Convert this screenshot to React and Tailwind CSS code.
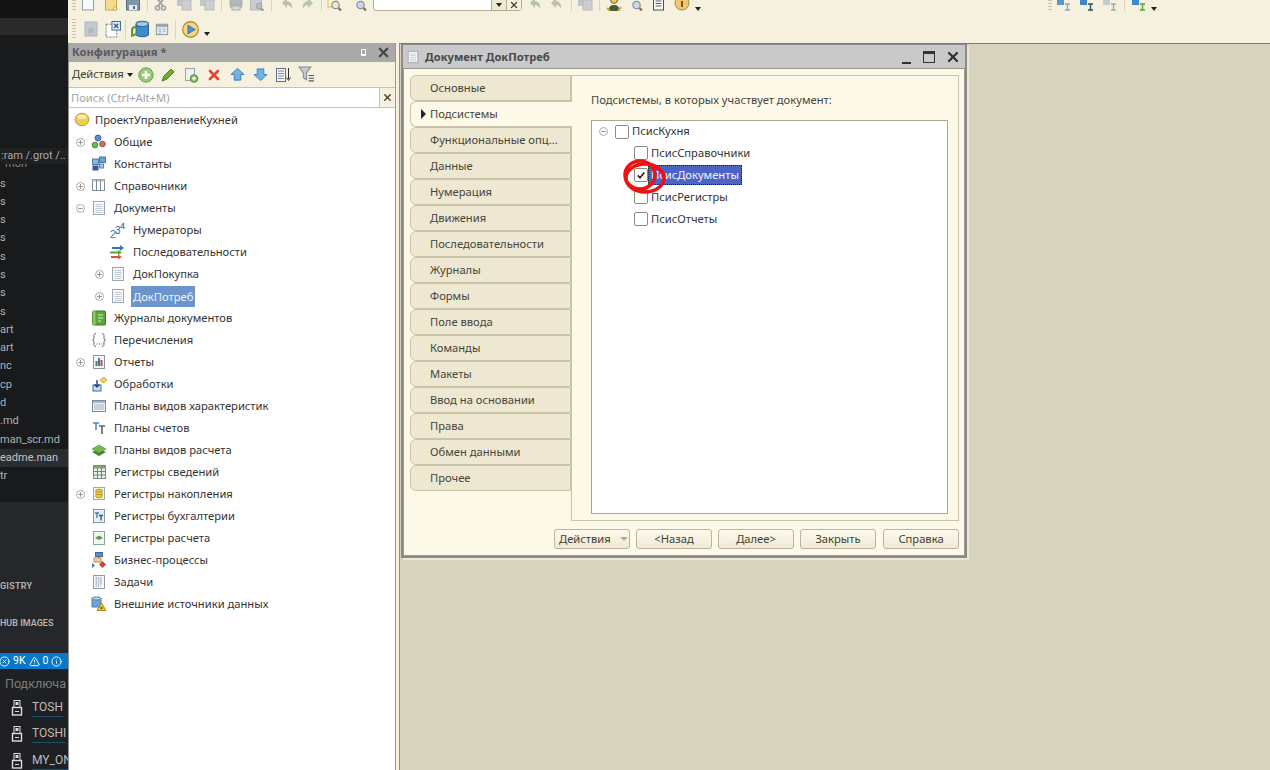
import { Minus, Plus, X, CircleX, TriangleAlert, Info as InfoCircle } from 'lucide-react';

const font = "font-['Noto_Sans',sans-serif]";

// --- small drawn icons (16x16 unless noted) ---
const Svg = ({ children, className = 'w-4 h-4' }) => (
    <svg viewBox="0 0 16 16" className={`${className} shrink-0`}>{children}</svg>
);

const DocIcon = ({ className }) => (
    <Svg className={className}>
        <rect x="2.5" y="1.5" width="11" height="13" fill="#f7f9fb" stroke="#9aa6b2" />
        <path d="M4.5 4.5h7M4.5 6.5h7M4.5 8.5h7M4.5 10.5h7M4.5 12.5h7" stroke="#c3ccd6" />
    </Svg>
);
const TopDoc = () => (
    <Svg>
        <rect x="2.5" y="-3" width="11" height="13" fill="#f7f9fb" stroke="#8d9cac" />
    </Svg>
);
const FolderDoc = () => (
    <Svg>
        <rect x="2.5" y="-3" width="11" height="13" fill="#f5dc8c" stroke="#c9a94e" />
        <path d="M9 10l4.500-4.500V10z" fill="#fff6cf" stroke="#c9a94e" />
    </Svg>
);
const SaveIcon = () => (
    <Svg>
        <rect x="1.5" y="-3" width="13" height="13" fill="#7f95a8" stroke="#566d80" />
        <rect x="4" y="5" width="8" height="5" fill="#e6ebef" />
        <rect x="8" y="6" width="2" height="3" fill="#566d80" />
    </Svg>
);
const Scissors = () => (
    <Svg>
        <path d="M3 -3l7 9M12 -3L5 6" stroke="#9ea4a8" strokeWidth="2" fill="none" />
        <circle cx="4.5" cy="8" r="2" fill="none" stroke="#9ea4a8" strokeWidth="1.600" />
        <circle cx="10.5" cy="8" r="2" fill="none" stroke="#9ea4a8" strokeWidth="1.600" />
    </Svg>
);
const GrayPages = () => (
    <Svg>
        <rect x="1" y="-4" width="9" height="10" fill="#c3c6c6" />
        <rect x="6" y="0" width="9" height="10" fill="#ccced0" stroke="#b8bbbd" />
    </Svg>
);
const GrayPrint = () => (
    <Svg>
        <rect x="1.5" y="-1" width="13" height="9" rx="2" fill="#b4b7b8" />
        <rect x="4" y="6" width="8" height="4" fill="#d8d9da" stroke="#a9acad" />
    </Svg>
);
const GrayPreview = () => (
    <Svg>
        <rect x="1.5" y="-4" width="11" height="14" fill="#c9ccd0" stroke="#b4b7bc" />
        <circle cx="10" cy="6" r="3" fill="#b9bdc2" stroke="#a2a6aa" />
        <path d="M12 8.500l2.500 2" stroke="#a08c80" strokeWidth="2" />
    </Svg>
);
const Turn = ({ flip }) => (
    <Svg>
        <g transform={flip ? 'matrix(-1 0 0 1 16 0)' : undefined}>
            <path d="M7 -2L2 3l5 5V5c2 0 4 1 5 4 1-5-2-8-5-8z" fill="#b9c0b4" />
        </g>
    </Svg>
);
const Loupe = ({ withDoc }) => (
    <Svg>
        {withDoc && <rect x="1" y="-3" width="9" height="10" fill="#fff3c0" stroke="#d8bf62" />}
        <circle cx="8.500" cy="5" r="3.700" fill={withDoc ? '#e7e7df' : '#c7d9ee'} stroke="#8b8f95" strokeWidth="1.200" />
        <path d="M11.500 8l2.500 2.500" stroke="#a0613e" strokeWidth="2.200" />
    </Svg>
);
const Person = () => (
    <Svg>
        <circle cx="8" cy="0" r="3.400" fill="#f0c66a" stroke="#6d5a2a" />
        <path d="M2 11c1-5 3-6 6-6s5 1 6 6z" fill="#4c5a3c" />
        <path d="M1 8l3 3M12 11l3-4" stroke="#d7a53c" strokeWidth="2" />
    </Svg>
);
const Info = () => (
    <Svg>
        <circle cx="8" cy="3" r="7" fill="#f1c66f" stroke="#a58a3f" />
        <rect x="7" y="1" width="2" height="6" fill="#6e5a28" />
    </Svg>
);
const DocLines = () => (
    <Svg>
        <rect x="3.500" y="-3" width="10" height="13" fill="#fff" stroke="#4d4d45" />
        <path d="M5.500 1h6M5.500 3.500h6M5.500 6h6" stroke="#55554d" />
    </Svg>
);
const Grip = () => (
    <div className="w-[4px] h-[20px] shrink-0 bg-[repeating-linear-gradient(180deg,#c9c2a0_0,#c9c2a0_1px,#f5f1dd_1px,#f5f1dd_3px)]" />
);
const Sep = ({ h = 'h-[19px]' }) => <div className={`w-px ${h} shrink-0 bg-[#d9d4b9]`} />;
const Caret = () => <div className="w-0 h-0 shrink-0 border-x-[3px] border-t-[4px] border-x-transparent border-t-[#222]" />;

// toolbar row 2 icons
const GrayForm = () => (
    <Svg>
        <rect x="2" y="1" width="12" height="14" fill="#c2c8cc" stroke="#afb5b8" />
        <rect x="5" y="7" width="6" height="5" fill="#b3b8bc" />
    </Svg>
);
const CrossForm = () => (
    <Svg className="w-[17px] h-[17px]">
        <rect x="2" y="3" width="10" height="12" fill="#fff" stroke="#7e8a96" strokeDasharray="2 1" />
        <rect x="7.500" y="0.500" width="8" height="8" fill="#eaf2fa" stroke="#4a6f94" />
        <path d="M9.500 2.500l4 4m0-4l-4 4" stroke="#2d5f8f" strokeWidth="1.300" />
    </Svg>
);
const DbIcon = () => (
    <Svg className="w-[18px] h-[18px]">
        <ellipse cx="10" cy="3.500" rx="5.500" ry="2.300" fill="#a5c8e6" stroke="#39719f" />
        <path d="M4.500 3.500v9c0 1.300 2.500 2.300 5.500 2.300s5.500-1 5.500-2.300v-9c0 1.300-2.500 2.300-5.500 2.300S4.500 4.800 4.500 3.500z" fill="#3f8ac8" stroke="#2f6b9e" />
        <path d="M1 9c0-2 1.500-3 3.500-3M1 9l-.500 5 4-1.500" fill="none" stroke="#5c9a36" strokeWidth="2" />
    </Svg>
);
const WinIcon = () => (
    <Svg className="w-[14px] h-[14px]">
        <rect x="1.500" y="2.500" width="13" height="12" fill="#e3e9ee" stroke="#7f8f9e" />
        <rect x="2" y="3" width="12" height="2.500" fill="#8fa3b5" />
        <path d="M4 8h3M4 10.500h3M4 13h3M9 8h3M9 10.500h3" stroke="#93a1ae" />
    </Svg>
);
const PlayIcon = () => (
    <Svg className="w-[17px] h-[17px]">
        <circle cx="8" cy="8" r="7.300" fill="#f6d68a" stroke="#b98f2c" strokeWidth="1.200" />
        <path d="M5.500 3.800l7 4.200-7 4.200z" fill="#4d8fc4" stroke="#2e6796" strokeWidth=".6" />
    </Svg>
);
const SmallSys = ({ a, b }) => (
    <Svg>
        <rect x="1" y="-3" width="7" height="8" fill={a} />
        <path d="M9 4h5M11.500 4v6M9 10h5" stroke={b} strokeWidth="1.400" fill="none" />
    </Svg>
);

// tree icons
const Ball = () => (
    <Svg>
        <ellipse cx="8" cy="7.500" rx="6.800" ry="6.300" fill="#f1cf4e" stroke="#b39a4f" />
        <ellipse cx="8" cy="5" rx="4.500" ry="2.200" fill="#fbeeb0" />
    </Svg>
);
const Common = () => (
    <Svg>
        <circle cx="7" cy="4" r="3" fill="#5a8fc9" stroke="#3b6c9f" />
        <circle cx="4" cy="11" r="2.800" fill="#6dbb46" stroke="#4a8a2c" />
        <circle cx="11.500" cy="10" r="2.800" fill="#c4726a" stroke="#965048" />
    </Svg>
);
const Constants = () => (
    <Svg>
        <rect x="1.500" y="3" width="6" height="5.500" fill="#8fb4d8" stroke="#4b7cab" />
        <rect x="8.500" y="1" width="6" height="5.500" fill="#6d9fcf" stroke="#4b7cab" />
        <rect x="1.500" y="9.500" width="6" height="5" fill="#2f5f91" />
        <rect x="8.500" y="8" width="4" height="4" fill="#aac3dc" stroke="#5b86b0" />
    </Svg>
);
const Catalog = () => (
    <Svg>
        <rect x="1.500" y="1.500" width="12" height="11" fill="#fff" stroke="#7d8b96" />
        <rect x="1.500" y="1.500" width="12" height="2" fill="#bcc5cc" />
        <path d="M5.500 2v10M9.500 2v10" stroke="#7d8b96" />
    </Svg>
);
const Numerator = () => (
    <Svg>
        <text x="0" y="16" fontSize="11" fill="#3a78b5" fontFamily="Liberation Sans">2</text>
        <text x="5" y="12" fontSize="10" fill="#2d6097" fontFamily="Liberation Sans">3</text>
        <text x="10" y="7" fontSize="9" fill="#26496e" fontFamily="Liberation Sans">4</text>
    </Svg>
);
const Sequence = () => (
    <Svg>
        <path d="M2 4h9" stroke="#3577b5" strokeWidth="2" />
        <path d="M10 1l4 3-4 3z" fill="#3577b5" />
        <path d="M0 8.500h9" stroke="#5ca636" strokeWidth="2" />
        <path d="M8 6l4 2.500-4 2.500z" fill="#5ca636" />
        <path d="M1 13h8" stroke="#d8523c" strokeWidth="2" />
        <path d="M8 10.500l4 2.500-4 2.500z" fill="#d8523c" />
    </Svg>
);
const Journal = () => (
    <Svg>
        <rect x="1.500" y="1" width="13" height="14" rx="1" fill="#5aa63a" stroke="#3c7c26" />
        <rect x="1.500" y="1" width="3" height="14" fill="#8ec46c" />
        <path d="M7 5h5M7 8h5M7 11h3" stroke="#dfeed4" />
    </Svg>
);
const Enums = () => (
    <Svg>
        <path d="M5 1.500C3 1.500 3 3 3 5s0 2.500-1.500 3C3 8.500 3 9 3 11s0 3.500 2 3.500M11 1.500c2 0 2 1.500 2 3.500s0 2.500 1.500 3C13 8.500 13 9 13 11s0 3.500-2 3.500" fill="none" stroke="#5b6a78" />
        <path d="M5.500 12h1M8 12h1M10.500 12h1" stroke="#555" />
    </Svg>
);
const Reports = () => (
    <Svg>
        <rect x="2.500" y="1.500" width="11" height="13" fill="#f5f7f9" stroke="#8795a1" />
        <rect x="4.500" y="7" width="2" height="5" fill="#3c8a3a" />
        <rect x="7" y="4" width="2" height="8" fill="#3e73ae" />
        <rect x="9.500" y="6" width="2" height="6" fill="#c8493c" />
    </Svg>
);
const DataProc = () => (
    <Svg>
        <path d="M9 4l4-3 3 3-4 3z" fill="#f2d565" stroke="#cda93a" />
        <rect x="2" y="9" width="8" height="6" fill="#cfdded" stroke="#3c6a9a" />
        <path d="M6 4v7M3.500 8.500L6 11l2.500-2.500" stroke="#20486f" strokeWidth="1.400" fill="none" />
    </Svg>
);
const CharTypes = () => (
    <Svg>
        <rect x="1.500" y="2.500" width="13" height="11" fill="#eef2f6" stroke="#7b8c9b" />
        <rect x="2" y="3" width="12" height="2" fill="#a7b7c5" />
        <path d="M3.500 7h9M3.500 9h9M3.500 11h9" stroke="#55718a" strokeDasharray="1 1" />
    </Svg>
);
const Accounts = () => (
    <Svg>
        <path d="M2 3h6M5 3v7" stroke="#4a8ac2" strokeWidth="1.600" />
        <path d="M8 6h6M11 6v8" stroke="#59636d" strokeWidth="1.600" />
    </Svg>
);
const CalcTypes = () => (
    <Svg>
        <path d="M1 10l7 4 7-4-7-3z" fill="#3f8a2e" />
        <path d="M1 7l7-4 7 4-7 4z" fill="#7ab84e" stroke="#4b8a2e" strokeWidth=".6" />
    </Svg>
);
const InfoReg = () => (
    <Svg>
        <rect x="2.500" y="1.500" width="12" height="13" fill="#e8f1e4" stroke="#71908a" />
        <rect x="3" y="2" width="11" height="2.500" fill="#7ca869" />
        <path d="M6.500 4v10M10.500 4v10M3 7.500h11M3 11h11" stroke="#6f8a6a" />
    </Svg>
);
const AccumReg = () => (
    <Svg>
        <rect x="2.500" y="1.500" width="11" height="12" fill="#f2f6fa" stroke="#9aaaba" />
        <ellipse cx="8" cy="5" rx="3.500" ry="1.800" fill="#f0c93e" stroke="#c39a20" />
        <ellipse cx="8" cy="7.500" rx="3.500" ry="1.800" fill="#f0c93e" stroke="#c39a20" />
        <ellipse cx="8" cy="10" rx="3.500" ry="1.800" fill="#f0c93e" stroke="#c39a20" />
    </Svg>
);
const BookReg = () => (
    <Svg>
        <rect x="2.500" y="1.500" width="11" height="13" fill="#e6f0f8" stroke="#7f9bb3" />
        <path d="M4 5h4M6 5v5" stroke="#3d7fb8" strokeWidth="1.400" />
        <path d="M8 7.500h4M10 7.500v5" stroke="#47525c" strokeWidth="1.400" />
    </Svg>
);
const CalcReg = () => (
    <Svg>
        <rect x="2.500" y="1.500" width="11" height="13" fill="#f1f6f3" stroke="#8ba3a0" />
        <path d="M4 8l4-2.500L12 8l-4 2z" fill="#5f9c45" />
    </Svg>
);
const BizProc = () => (
    <Svg>
        <rect x="4.500" y="0.500" width="7" height="4" fill="#5c8fbe" stroke="#3a6a96" />
        <path d="M8 4.500v2" stroke="#555" />
        <rect x="3" y="6" width="7" height="4" fill="#f1d2a8" stroke="#c58d4c" />
        <path d="M1 11l3 2.500L1 16z" fill="#4a79a8" />
        <path d="M11.500 9l3.500 3.500-3.500 3.500L8 12.500z" fill="#d8402f" />
    </Svg>
);
const Tasks = () => (
    <Svg>
        <rect x="2.500" y="1.500" width="11" height="13" fill="#f8fafc" stroke="#8c9aa8" />
        <path d="M4.500 4h7M4.500 6h7M4.500 8h7M4.500 10h7M4.500 12h5" stroke="#7e8d9c" strokeDasharray="1.500 .8" />
    </Svg>
);
const External = () => (
    <Svg>
        <path d="M1 2h9v9H1z" fill="#6ea3d4" stroke="#4a7eae" />
        <ellipse cx="5.500" cy="2.500" rx="4.500" ry="1.500" fill="#c2daf0" stroke="#4a7eae" />
        <path d="M10.500 7l4.500 7.500H6z" fill="#efc748" stroke="#a9861e" />
        <circle cx="10.500" cy="12" r="1.200" fill="#7a5d10" />
    </Svg>
);

const Expander = ({ open }) => (
    <div className="w-[9px] h-[9px] shrink-0 rounded-full border border-[#a9a9a9] flex items-center justify-center bg-white">
        {open
            ? <Minus className="w-[7px] h-[7px] text-[#777]" strokeWidth={2.500} />
            : <Plus className="w-[7px] h-[7px] text-[#777]" strokeWidth={2.500} />}
    </div>
);

const tree = [
    { label: 'Общие', Icon: Common, exp: 'plus' },
    { label: 'Константы', Icon: Constants },
    { label: 'Справочники', Icon: Catalog, exp: 'plus' },
    { label: 'Документы', Icon: DocIcon, exp: 'minus' },
    { label: 'Нумераторы', Icon: Numerator, sub: true },
    { label: 'Последовательности', Icon: Sequence, sub: true },
    { label: 'ДокПокупка', Icon: DocIcon, sub: true, exp: 'plus' },
    { label: 'ДокПотреб', Icon: DocIcon, sub: true, exp: 'plus', selected: true },
    { label: 'Журналы документов', Icon: Journal },
    { label: 'Перечисления', Icon: Enums },
    { label: 'Отчеты', Icon: Reports, exp: 'plus' },
    { label: 'Обработки', Icon: DataProc },
    { label: 'Планы видов характеристик', Icon: CharTypes },
    { label: 'Планы счетов', Icon: Accounts },
    { label: 'Планы видов расчета', Icon: CalcTypes },
    { label: 'Регистры сведений', Icon: InfoReg },
    { label: 'Регистры накопления', Icon: AccumReg, exp: 'plus' },
    { label: 'Регистры бухгалтерии', Icon: BookReg },
    { label: 'Регистры расчета', Icon: CalcReg },
    { label: 'Бизнес-процессы', Icon: BizProc },
    { label: 'Задачи', Icon: Tasks },
    { label: 'Внешние источники данных', Icon: External },
];

const tabs = ['Основные', 'Подсистемы', 'Функциональные опц...', 'Данные', 'Нумерация', 'Движения', 'Последовательности', 'Журналы', 'Формы', 'Поле ввода', 'Команды', 'Макеты', 'Ввод на основании', 'Права', 'Обмен данными', 'Прочее'];

const files = ['s', 's', 's', 's', 's', 's', 's', 's', 'art', 'art', 'nc', 'cp', 'd', '.md', 'man_scr.md', 'eadme.man', 'tr'];

const Check = ({ checked }) => (
    <div className="relative z-10 w-[14px] h-[14px] shrink-0 rounded-[2px] border border-[#8b8b80] bg-white flex items-center justify-center">
        {checked && (
            <svg viewBox="0 0 12 12" className="w-[10px] h-[10px]">
                <path d="M2 6.500l2.800 2.800L10 3" fill="none" stroke="#222" strokeWidth="2" />
            </svg>
        )}
    </div>
);

const Btn = ({ children, className = 'w-[76px]' }) => (
    <div className={`${className} h-[20px] rounded-[3px] border border-[#b9b49a] bg-[linear-gradient(180deg,#fdfaee,#efe9d5)] flex items-center justify-center text-[11.200px] text-[#3f3f30]`}>
        {children}
    </div>
);

const UsbIcon = () => (
    <svg viewBox="0 0 12 16" className="w-[12px] h-[18px] shrink-0">
        <rect x="3" y="0.500" width="6" height="7" fill="none" stroke="#ddd" />
        <rect x="4.500" y="2" width="3" height="3" fill="#ddd" />
        <rect x="1.500" y="7.500" width="9" height="7.500" fill="none" stroke="#ddd" strokeWidth="1.400" />
        <path d="M4 11.500h4" stroke="#ddd" />
    </svg>
);

export default function App() {
    return (
        <div className={`${font} w-[1270px] h-[770px] overflow-hidden flex bg-[#d8d3bf]`}>
            {/* editor left behind the app window */}
            <div className="w-[68px] shrink-0 h-full overflow-hidden flex flex-col bg-[#191a1b] text-[#b0b0b0] text-[11px] whitespace-nowrap font-['Roboto',sans-serif]">
                <div className="h-[18px] shrink-0 bg-[#131313]" />
                <div className="h-[17px] shrink-0 bg-[#2a2a2a]" />
                <div className="h-[113px] shrink-0" />
                <div className="h-[16px] shrink-0 bg-[#1f2021] text-[#a9a9a9] leading-[16px] pl-px">:ram /.grot /..</div>
                <div className="h-[10.500px] shrink-0 overflow-hidden text-[#8a8a8a] pl-[5px]">
                    <div className="leading-[10px] -translate-y-[5px]">mon</div>
                </div>
                {files.map((f, i) => (
                    <div key={i} className={`h-[18.300px] shrink-0 leading-[18px] ${f === 'eadme.man' ? 'bg-[#2c2d2f] text-[#c4c4c4]' : ''}`}>{f}</div>
                ))}
                <div className="h-[16.500px] shrink-0" />
                <div className="flex-1 min-h-0 flex flex-col bg-[#26272a]">
                    <div className="h-[90px] shrink-0 flex items-end text-[9px] font-semibold text-[#b4b4b4] tracking-wide leading-[12px]">GISTRY</div>
                    <div className="h-[37px] shrink-0 flex items-end text-[9px] font-semibold text-[#b4b4b4] leading-[12px]">HUB IMAGES</div>
                    <div className="h-[24px] shrink-0" />
                    <div className="h-[16px] shrink-0 bg-[#0a78c8] text-white text-[10.500px] flex items-center -ml-px gap-[3px]">
                        <CircleX className="w-[11px] h-[11px]" />
                        <span>9K</span>
                        <TriangleAlert className="w-[11px] h-[11px]" />
                        <span>0</span>
                        <InfoCircle className="w-[11px] h-[11px]" />
                    </div>
                    <div className="flex-1 bg-[#1e2023] overflow-hidden">
                        <div className="pl-[5px] pt-[6px] text-[#7d7d7d] text-[12.500px] leading-[17px]">Подключа</div>
                        <div className="flex flex-col gap-[9.500px] pt-[7px]">
                            {['TOSH', 'TOSHI', 'MY_ON'].map(n => (
                                <div key={n} className="flex items-center gap-[9px] pl-[11px] h-[17px] text-[#bdbdbd] text-[12px]">
                                    <UsbIcon />
                                    <span className="border-b border-[#1d4d6d] leading-[17px]">{n}</span>
                                </div>
                            ))}
                        </div>
                    </div>
                </div>
            </div>

            <div className="flex-1 min-w-0 flex flex-col">
                {/* toolbars */}
                <div className="h-[43px] shrink-0 bg-[#f5f1de] flex flex-col">
                    <div className="h-[11px] overflow-hidden flex items-start pl-[4px]">
                        <Grip />
                        <div className="flex items-start gap-[6.500px] ml-[4px]">
                            <TopDoc /><FolderDoc /><SaveIcon />
                        </div>
                        <div className="ml-[6px]"><Sep /></div>
                        <div className="flex items-start gap-[7px] ml-[5px]">
                            <Scissors /><GrayPages /><GrayPages />
                        </div>
                        <div className="ml-[6px]"><Sep /></div>
                        <div className="flex items-start gap-[5px] ml-[6px]">
                            <GrayPrint /><GrayPreview />
                        </div>
                        <div className="ml-[6px]"><Sep /></div>
                        <div className="flex items-start gap-[3px] ml-[8px]">
                            <Turn /><Turn flip />
                        </div>
                        <div className="ml-[6px]"><Sep /></div>
                        <div className="flex items-start gap-[9px] ml-[5px]">
                            <Loupe withDoc /><Loupe />
                        </div>
                        <div className="ml-[5px] w-[149px] h-[12px] -mt-[1px] bg-white border border-[#b3ad8f] rounded-b-[3px] flex justify-end shrink-0">
                            <div className="w-[15px] h-full border-l border-[#b3ad8f] bg-[#efe9d0] flex items-center justify-center"><Caret /></div>
                            <div className="w-[15px] h-full border-l border-[#b3ad8f] bg-[#f5f1de] flex items-center justify-center">
                                <X className="w-[10px] h-[10px] text-[#4b4224]" strokeWidth={3} />
                            </div>
                        </div>
                        <div className="flex items-start gap-[5px] ml-[6px]">
                            <Turn /><Turn />
                        </div>
                        <div className="ml-[6px]"><Sep /></div>
                        <div className="ml-[5px]"><GrayPages /></div>
                        <div className="ml-[6px]"><Sep /></div>
                        <div className="flex items-start gap-[6px] ml-[6px]">
                            <Person /><Loupe /><DocLines />
                        </div>
                        <div className="flex items-start gap-[5px] ml-[8px]">
                            <Info />
                            <div className="pt-[7px]"><Caret /></div>
                        </div>
                        <div className="ml-auto flex items-start pr-[113px]">
                            <Grip />
                            <div className="flex items-start gap-[7px] ml-[4px]">
                                <SmallSys a="#5b94c6" b="#87a9c4" />
                                <SmallSys a="#3f87c4" b="#2e4d62" />
                                <SmallSys a="#c4ccd2" b="#9eaab2" />
                            </div>
                            <div className="ml-[6px]"><Sep /></div>
                            <div className="ml-[6px]"><SmallSys a="#3b8ac6" b="#58a03c" /></div>
                            <div className="ml-[4px] pt-[7px]"><Caret /></div>
                        </div>
                    </div>
                    <div className="h-[8px]" />
                    <div className="flex items-center h-[20px] pl-[4px]">
                        <Grip />
                        <div className="ml-[7px]"><GrayForm /></div>
                        <div className="ml-[5px]"><CrossForm /></div>
                        <div className="ml-[4px]"><Sep /></div>
                        <div className="ml-[5px]"><DbIcon /></div>
                        <div className="ml-[6px]"><WinIcon /></div>
                        <div className="ml-[6px]"><Sep /></div>
                        <div className="ml-[6px]"><PlayIcon /></div>
                        <div className="ml-[5px] pt-[10px]"><Caret /></div>
                    </div>
                </div>

                <div className="flex-1 min-h-0 flex">
                    {/* configuration panel */}
                    <div className="w-[328px] shrink-0 flex flex-col bg-[#f5f1de] border-l border-[#8e8e8e] border-r border-r-[#9d9a88]">
                        <div className="h-[19px] shrink-0 bg-[#a9a9a9] flex items-center pl-[3px] pr-[4px]">
                            <span className="text-[11.200px] font-bold text-[#5a5a5a]">Конфигурация *</span>
                            <span className="ml-auto w-[5px] h-[7px] border border-white rounded-[1px] border-b-[2px] mr-[10px]" />
                            <X className="w-[15px] h-[15px] text-[#444]" strokeWidth={3.500} />
                        </div>
                        <div className="h-[25px] shrink-0 flex items-center pl-[3px]">
                            <span className="text-[11.200px] text-[#3d3d2c]">Действия</span>
                            <div className="ml-[3px]"><Caret /></div>
                            <svg viewBox="0 0 16 16" className="w-[16px] h-[16px] ml-[5px]">
                                <circle cx="8" cy="8" r="7.200" fill="#98cb78" stroke="#6f9d57" />
                                <path d="M8 4v8M4 8h8" stroke="#fff" strokeWidth="2.600" />
                            </svg>
                            <svg viewBox="0 0 16 16" className="w-[16px] h-[16px] ml-[6px]">
                                <path d="M2 14l2-5 7-7 3 3-7 7z" fill="#6dae34" stroke="#4a8020" />
                            </svg>
                            <svg viewBox="0 0 16 16" className="w-[16px] h-[16px] ml-[7px]">
                                <rect x="2.500" y="1.500" width="9" height="12" fill="#eef1f3" stroke="#98a4ac" />
                                <circle cx="11" cy="11.500" r="3.800" fill="#7fb561" stroke="#5a8e42" />
                                <path d="M11 9.500v4M9 11.500h4" stroke="#fff" strokeWidth="1.400" />
                            </svg>
                            <X className="w-[16px] h-[16px] ml-[7px] text-[#e2443c]" strokeWidth={4} />
                            <svg viewBox="0 0 16 16" className="w-[15px] h-[15px] ml-[8px]">
                                <path d="M8 1.500L15 8h-3.500v6h-7V8H1z" fill="#6fb2e4" stroke="#3f7fb4" />
                            </svg>
                            <svg viewBox="0 0 16 16" className="w-[15px] h-[15px] ml-[8px]">
                                <path d="M8 14.500L15 8h-3.500V2h-7v6H1z" fill="#6fb2e4" stroke="#3f7fb4" />
                            </svg>
                            <svg viewBox="0 0 16 16" className="w-[16px] h-[16px] ml-[7px]">
                                <rect x="1.500" y="1.500" width="9" height="13" fill="#f5f7f9" stroke="#5d7183" />
                                <path d="M3 4h6M3 6.500h6M3 9h6M3 11.500h6" stroke="#7a8a98" />
                                <path d="M13.500 1v11M11.500 10.500l2 3 2-3" stroke="#333" fill="none" />
                            </svg>
                            <svg viewBox="0 0 16 16" className="w-[17px] h-[17px] ml-[7px]">
                                <path d="M1 1h11L8 6.500V13l-3-2V6.500z" fill="#c4cbd0" stroke="#7f8a92" />
                                <path d="M10 9h5M10 11.500h5M10 14h5" stroke="#556" />
                            </svg>
                        </div>
                        <div className="h-[21px] shrink-0 flex bg-white border-y border-[#c9c4a8]">
                            <span className="flex-1 pl-[2px] text-[11.200px] leading-[19px] text-[#a3a3a3]">Поиск (Ctrl+Alt+M)</span>
                            <div className="w-[16px] border-l border-[#c9c4a8] bg-[#f5f1de] flex items-center justify-center">
                                <X className="w-[11px] h-[11px] text-[#4b4224]" strokeWidth={3} />
                            </div>
                        </div>
                        <div className="flex-1 min-h-0 bg-white flex flex-col text-[11.200px] text-[#333] overflow-hidden pt-px">
                            <div className="h-[22px] shrink-0 flex items-center pl-[5px] gap-[5px]">
                                <Ball />
                                <span>ПроектУправлениеКухней</span>
                            </div>
                            {tree.map(({ label, Icon, exp, sub, selected }) => (
                                <div key={label} className={`h-[22px] shrink-0 flex items-center ${sub ? 'pl-[26px]' : 'pl-[7px]'}`}>
                                    <div className="w-[9px] shrink-0 flex">
                                        {exp && <Expander open={exp === 'minus'} />}
                                    </div>
                                    <div className="ml-[6px]"><Icon /></div>
                                    {selected
                                        ? <span className="ml-[5px] px-[2px] h-[21px] leading-[21px] bg-[#6b93cc] text-[#eef3fa]">{label}</span>
                                        : <span className="ml-[7px]">{label}</span>}
                                </div>
                            ))}
                        </div>
                    </div>

                    {/* splitter */}
                    <div className="w-[3px] shrink-0 bg-[#f5f1de]" />

                    {/* workspace */}
                    <div className="flex-1 min-w-0 flex flex-col border-l border-[#8e8e8e] border-t border-t-[#7d7a6a] pl-[1px]">
                        <div className="w-[566px] h-[514px] shrink-0 flex flex-col bg-[#c9c9c9] border-2 border-[#8a8a8a] border-t-[1px] shadow-[2px_2px_0_#ebe7d6]">
                            <div className="h-[23px] shrink-0 flex items-center pl-[3px] pr-[4px]">
                                <DocIcon className="w-[14px] h-[14px] mt-px" />
                                <span className="ml-[5px] mt-[2px] text-[11.200px] font-bold text-[#4a4a4a]">Документ ДокПотреб</span>
                                <div className="ml-auto w-[9px] h-[2px] mt-[13px] bg-[#333]" />
                                <div className="ml-[12px] w-[12px] h-[12px] border border-[#333] border-t-[3px]" />
                                <X className="ml-[10px] w-[16px] h-[16px] text-[#333]" strokeWidth={3.500} />
                            </div>
                            <div className="flex-1 min-h-0 bg-[#fdf9e8] border border-[#9d9a88] flex flex-col pl-[6px] pr-[5px] pt-[6px] pb-[6px] text-[#45453a]">
                                <div className="h-[446px] shrink-0 flex text-[11.200px]">
                                    <div className="w-[161px] shrink-0 flex flex-col">
                                        {tabs.map((t, i) => (
                                            i === 1 ? (
                                                <div key={t} className="h-[26px] shrink-0 flex items-center bg-[#fdf9e8] border border-r-0 border-[#c9c4a8] rounded-l-[6px] pl-[11px] relative z-10 -mr-px">
                                                    <div className="w-0 h-0 border-y-[5px] border-l-[5px] border-y-transparent border-l-[#222] -ml-[1px] mr-[3px]" />
                                                    <span className="ml-[1px]">{t}</span>
                                                </div>
                                            ) : (
                                                <div key={t} className="h-[26px] shrink-0 flex items-center bg-[#eee8d2] border border-[#c9c4a8] rounded-l-[6px] pl-[19px]">
                                                    {t}
                                                </div>
                                            )
                                        ))}
                                    </div>
                                    <div className="flex-1 min-w-0 border border-[#c9c4a8] flex flex-col pl-[19px] pr-[10px] pb-[6px]">
                                        <div className="h-[44px] shrink-0 flex items-center pt-[4px]">Подсистемы, в которых участвует документ:</div>
                                        <div className="flex-1 min-h-0 bg-white border border-[#a9a78f] text-[#333] flex flex-col">
                                            <div className="h-[21px] shrink-0 flex items-center pl-[7px]">
                                                <Expander open />
                                                <div className="ml-[7px]"><Check /></div>
                                                <span className="ml-[3px]">ПсисКухня</span>
                                            </div>
                                            {['ПсисСправочники', 'ПсисДокументы', 'ПсисРегистры', 'ПсисОтчеты'].map((s, i) => (
                                                <div key={s} className="h-[22px] shrink-0 flex items-center pl-[42px] relative">
                                                    <Check checked={i === 1} />
                                                    {i === 1 ? (
                                                        <>
                                                            <span className="h-[20px] leading-[18px] pl-[2px] pr-[2px] bg-[#4d64c4] text-[#f2f4fb] border border-dotted border-[#1d1d1d]">{s}</span>
                                                            <svg viewBox="0 0 44 36" className="absolute z-20 left-[31px] top-[-5px] w-[44px] h-[36px] pointer-events-none">
                                                                <ellipse cx="17" cy="16" rx="15" ry="14" fill="none" stroke="#f20f14" strokeWidth="3.500" />
                                                                <ellipse cx="22" cy="19" rx="19" ry="14" fill="none" stroke="#f20f14" strokeWidth="3.500" />
                                                            </svg>
                                                        </>
                                                    ) : (
                                                        <span className="ml-[3px]">{s}</span>
                                                    )}
                                                </div>
                                            ))}
                                        </div>
                                    </div>
                                </div>
                                <div className="flex gap-[6px] justify-end mt-[8px]">
                                    <Btn className="w-[76px] !justify-start pl-[4px]">
                                        Действия
                                        <span className="ml-[9px] w-0 h-0 border-x-[4px] border-t-[4px] border-x-transparent border-t-[#b0ac9a]" />
                                    </Btn>
                                    <Btn>&lt;Назад</Btn>
                                    <Btn>Далее&gt;</Btn>
                                    <Btn>Закрыть</Btn>
                                    <Btn className="w-[76px] ml-px">Справка</Btn>
                                </div>
                            </div>
                        </div>
                    </div>
                </div>
            </div>
        </div>
    );
}
